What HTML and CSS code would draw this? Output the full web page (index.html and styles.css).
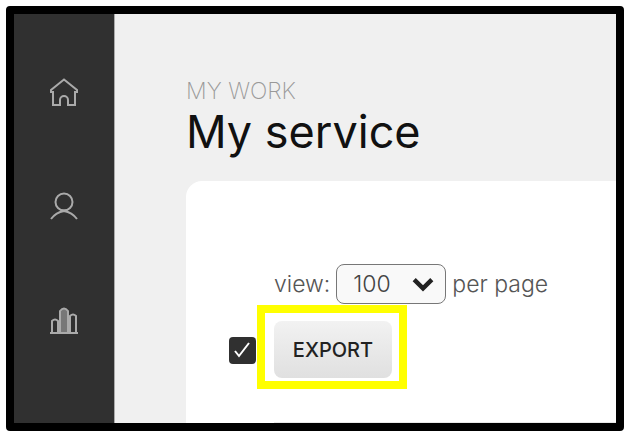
FILE: index.html
```html
<!DOCTYPE html>
<html lang="en">
<head>
    <meta charset="UTF-8">
    <meta name="viewport" content="width=device-width, initial-scale=1.0">
    <title>My service</title>
    <link rel="stylesheet" href="styles.css">
</head>
<body>
    <div class="frame">
        <!-- Sidebar -->
        <nav class="sidebar">
            <a href="#home" aria-label="Home">
                <svg viewBox="0 0 28 28"><path d="M1 14v-2L14 1.5 27 12v2h-2v13h-7v-5a4 4 0 0 0-8 0v5H3V14z"/></svg>
            </a>
            <a href="#profile" aria-label="Profile">
                <svg viewBox="0 0 28 28"><circle cx="14" cy="10" r="8.5"/><path d="M1 27c3-4 7-7 13-8 6 1 10 4 13 8M11 18.5h6"/></svg>
            </a>
            <a href="#reports" aria-label="Reports">
                <svg viewBox="0 0 28 28"><path class="bar-fill" d="M10 26V5q4-5 8 0v21z"/><path d="M0 27h28M2 26V15q3-3 6 0v11M10 26V5q4-5 8 0v21M20 26V10q3-3 6 0v16"/></svg>
            </a>
        </nav>

        <main class="content">
            <p class="eyebrow">MY WORK</p>
            <h1>My service</h1>

            <div class="card">
                <!-- Page size -->
                <div class="view">
                    <label for="pageSize">view:</label>
                    <span class="select-box">
                        <select id="pageSize">
                            <option>50</option>
                            <option selected>100</option>
                            <option>200</option>
                        </select>
                        <svg class="chevron" viewBox="0 0 20 14"><path d="M2 3l8 8 8-8"/></svg>
                    </span>
                    <span class="per-page">per page</span>
                </div>

                <!-- Export -->
                <div class="actions">
                    <input type="checkbox" id="selectAll" aria-label="Select all" checked>
                    <div class="highlight">
                        <button type="button">EXPORT</button>
                    </div>
                </div>

                <div class="results"></div>
            </div>
        </main>
    </div>
</body>
</html>
```

FILE: styles.css
```css
* {
    box-sizing: border-box;
}
body {
    margin: 0;
    padding: 6px 2px 1px 6px;
    background: white;
    color: #555;
    font-family: Inter, Arial, sans-serif;
}
.frame {
    display: flex;
    height: calc(100vh - 7px);
    border: 8px solid black;
    border-radius: 4px;
    background: #f0f0f0;
    overflow: hidden;
}
.sidebar {
    display: flex;
    flex-direction: column;
    align-items: center;
    gap: 86px;
    flex: 0 0 101px;
    padding-top: 64px;
    border-right: 1px solid #aaa;
    background: #303030;
}
.sidebar a {
    height: 28px;
}
.sidebar svg {
    display: block;
    width: 28px;
    height: 28px;
    fill: none;
    stroke: #aaa;
    stroke-width: 2;
}
.sidebar .bar-fill {
    fill: #777;
    stroke: none;
}
.content {
    display: flex;
    flex-direction: column;
    flex: 1;
    padding: 64px 0 0 71px;
}
.eyebrow {
    margin: 0;
    color: #999;
    font-size: 23px;
    font-weight: 200;
    line-height: 26px;
}
h1 {
    margin: 0 0 21px;
    color: #111;
    font-size: 45px;
    font-weight: 400;
    line-height: 56px;
}
.card {
    display: flex;
    flex-direction: column;
    flex: 1;
    padding: 83px 0 0 43px;
    border-top-left-radius: 16px;
    background: white;
}
.view {
    display: flex;
    align-items: center;
    gap: 6px;
    padding-left: 45px;
    font-size: 23px;
    font-weight: 300;
}
.select-box {
    display: grid;
    align-items: center;
    width: 110px;
}
.select-box select,
.chevron {
    grid-area: 1 / 1;
}
select {
    width: 100%;
    height: 40px;
    padding: 0 16px;
    border: 1px solid #777;
    border-radius: 8px;
    background: #f9f9f9;
    color: #444;
    font: inherit;
    appearance: none;
}
.chevron {
    justify-self: end;
    width: 22px;
    height: 16px;
    margin-right: 12px;
    fill: none;
    stroke: #222;
    stroke-width: 4;
    pointer-events: none;
}
.actions {
    display: flex;
    align-items: center;
    gap: 1px;
    margin-top: 1px;
}
input[type="checkbox"] {
    width: 27px;
    height: 27px;
    margin: 6px 0 0;
    border-radius: 4px;
    background: #303030 url("data:image/svg+xml,%3Csvg xmlns='http://www.w3.org/2000/svg' viewBox='0 0 27 27'%3E%3Cpath d='M6 14l4 5L20 6' fill='none' stroke='white' stroke-width='2'/%3E%3C/svg%3E") center / contain;
    appearance: none;
}
.highlight {
    padding: 8px 7px 3px 9px;
    border: 8px solid yellow;
}
button {
    display: block;
    width: 118px;
    height: 57px;
    padding: 0;
    border: none;
    border-radius: 8px;
    background: linear-gradient(#f2f2f2, #e0e0e0);
    color: #222;
    font-family: inherit;
    font-size: 20px;
    font-weight: 500;
}
.results {
    margin: auto 0 0 45px;
    border-top: 1px solid #e8e8e8;
}
```
